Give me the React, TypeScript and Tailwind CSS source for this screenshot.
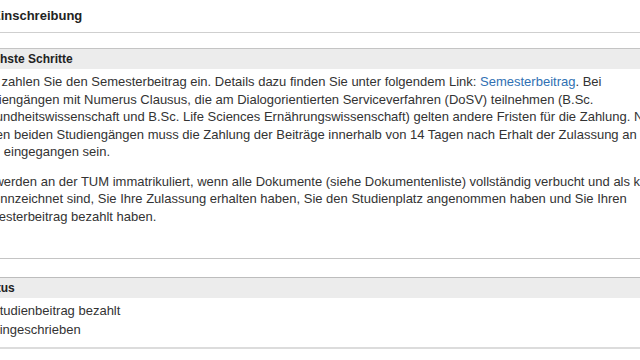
export default function App() {
  return (
    <div className="w-[640px] h-[360px] overflow-hidden bg-white font-['Liberation_Sans',Arial,sans-serif] text-[#333]">
      <div className="-ml-[40px] w-[740px]">
        {/* Seitentitel */}
        <div className="pt-[8px] pb-[8px] pl-[32px] border-b border-[#cfcfcf]">
          <h1 className="text-[13px] leading-[16px] font-bold text-[#222]">Einschreibung</h1>
        </div>

        {/* Nächste Schritte */}
        <section className="mt-[15px] border-t border-b border-[#c4c4c4]">
          <div className="h-[20px] bg-[#ececec] pl-[18px] flex items-center">
            <h2 className="text-[12px] font-bold text-[#222]">Nächste Schritte</h2>
          </div>
          <div className="pt-1 pb-[33px] pl-[12px] pr-[24px] text-[13px] leading-[17.5px]">
            <p className="mb-3">
              Bitte zahlen Sie den Semesterbeitrag ein. Details dazu finden Sie unter folgendem Link:{' '}
              <a href="#" className="text-[#3070b3]">Semesterbeitrag</a>. Bei Studiengängen mit Numerus Clausus,
              die am Dialogorientierten Serviceverfahren (DoSV) teilnehmen (B.Sc. Gesundheitswissenschaft und
              B.Sc. Life Sciences Ernährungswissenschaft) gelten andere Fristen für die Zahlung. Nur bei diesen
              beiden Studiengängen muss die Zahlung der Beiträge innerhalb von 14 Tagen nach Erhalt der Zulassung
              an der TUM eingegangen sein.
            </p>
            <p>
              Sie werden an der TUM immatrikuliert, wenn alle Dokumente (siehe Dokumentenliste) vollständig
              verbucht und als korrekt gekennzeichnet sind, Sie Ihre Zulassung erhalten haben, Sie den
              Studienplatz angenommen haben und Sie Ihren Semesterbeitrag bezahlt haben.
            </p>
          </div>
        </section>

        {/* Status */}
        <section className="mt-[18px] border-t border-[#bdbdbd] border-b-2 border-b-[#dcdcdc]">
          <div className="h-[20px] bg-[#ececec] pl-[18px] flex items-center">
            <h2 className="text-[12px] font-bold text-[#222]">Status</h2>
          </div>
          <ul className="pt-[3px] pb-[8px] pl-[31px] text-[13px] leading-[19px]">
            <li>Studienbeitrag bezahlt</li>
            <li>Eingeschrieben</li>
          </ul>
        </section>
      </div>
    </div>
  );
}
